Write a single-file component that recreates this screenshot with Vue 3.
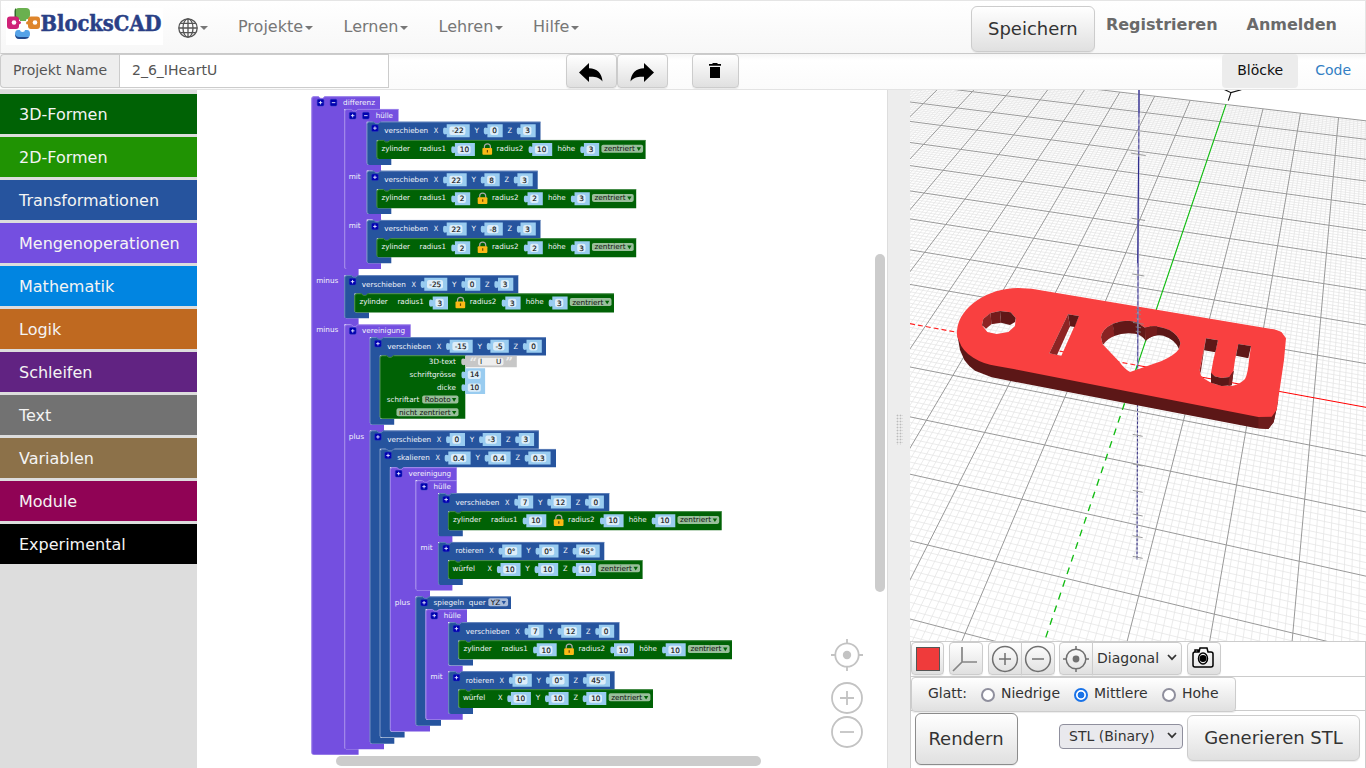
<script setup>
const menus = ['Projekte', 'Lernen', 'Lehren', 'Hilfe']
const categories = [
  ['3D-Formen', '#006205'], ['2D-Formen', '#209303'], ['Transformationen', '#26549e'],
  ['Mengenoperationen', '#744fe0'], ['Mathematik', '#0185e1'], ['Logik', '#bf6920'],
  ['Schleifen', '#612382'], ['Text', '#727272'], ['Variablen', '#8c7149'],
  ['Module', '#900355'], ['Experimental', '#000000']
]

/* ---------- block workspace ---------- */
const PURPLE = '#744fe0', BLUE = '#26549e', GREEN = '#006205'
const shapes = [], texts = [], values = [], icons = [], locks = [], drops = []

function label(t, x, w, y) { texts.push({ t, x, w, y }) }
function icon(x, y, minus) { icons.push({ x, y, minus }) }

// Block that wraps statements: header, left wall, and a foot after every slot.
// Every slot gets a small tab that fills the notch of the block plugged into it.
function wrap(color, x, y, hr, hb, ix, fr, feet) {
  let d = `M${x} ${y + 2.5}Q${x} ${y} ${x + 2.5} ${y}h4.5l2 1.6h2.4l2 -1.6H${hr}V${hb}H${ix}`
  let tabs = `M${ix + 6} ${hb - 0.4}h8.5v2.3h-8.5Z`
  feet.forEach(([a, b], i) => {
    d += `V${a - 2}Q${ix} ${a} ${ix + 2} ${a}H${fr}V${b}`
    d += i < feet.length - 1 ? `H${ix}` : `H${x + 2.5}Q${x} ${b} ${x} ${b - 2.5}Z`
    if (i < feet.length - 1) tabs += `M${ix + 6} ${b - 0.4}h8.5v2.3h-8.5Z`
  })
  const b = feet[feet.length - 1][1]
  const hi = `M${x + 0.8} ${b - 1}Q${x + 0.4} ${b - 1.6} ${x + 0.4} ${b - 3}V${y + 2.6}Q${x + 0.4} ${y + 0.4} ${x + 2.6} ${y + 0.4}h4.4l2 1.6h2.4l2 -1.6H${hr}`
  shapes.push({ d: d + tabs, hi, color })
}
function leaf(x, y, r, b) {
  const d = `M${x} ${y + 2.5}Q${x} ${y} ${x + 2.5} ${y}h4.5l2 1.6h2.4l2 -1.6H${r}V${b}H${x + 2.5}Q${x} ${b} ${x} ${b - 2.5}Z`
  const hi = `M${x + 0.8} ${b - 1}Q${x + 0.4} ${b - 1.6} ${x + 0.4} ${b - 3}V${y + 2.6}Q${x + 0.4} ${y + 0.4} ${x + 2.6} ${y + 0.4}h4.4l2 1.6h2.4l2 -1.6H${r}`
  shapes.push({ d, hi, color: GREEN })
}
const valueWidths = { 1: 15.3, 2: 20 }
function value(t, x, y) {
  let w = valueWidths[t.length] || 23
  if (t[0] === '-' && t.length === 2) w = 18.4
  if (t.includes('.')) w = 22.3
  if (t.includes('°')) w = t.length === 2 ? 19.3 : 23.5
  values.push({ t, x, y, w })
  return x + w
}
function axes(vals, x, y, vy) {
  let p = x
  'XYZ'.split('').forEach((n, i) => {
    label(n, p, 4.5, y)
    p = value(vals[i], p + 12.9, vy) + 4.8
  })
  return p - 4.8
}
const nameWidths = { verschieben: 44, skalieren: 32.5, rotieren: 28.3 }
function transform(name, x, y, fr, foot, vals, hr) {
  wrap(BLUE, x, y, hr, y + 18.3, x + 10, fr, [foot])
  icon(x + 4.8, y + 3.1)
  label(name, x + 17.4, nameWidths[name], y + 11.4)
  axes(vals, x + 17.4 + nameWidths[name] + 5.6, y + 11.4, y + 2.5)
}
function zylinder(x, y, r1, r2, h, r) {
  leaf(x, y, r, y + 19)
  label('zylinder', x + 5, 28.4, y + 11)
  label('radius1', x + 43, 26.4, y + 11)
  let p = value(r1, x + 78.3, y + 3)
  locks.push({ x: p + 7.5, y: y + 3 })
  label('radius2', p + 21.7, 26.6, y + 11)
  p = value(r2, p + 57.3, y + 3)
  label('höhe', p + 5.2, 17.7, y + 11)
  p = value(h, p + 31.7, y + 3)
  drops.push({ t: 'zentriert', x: p + 2.2, y: y + 4.7, w: 41.7, tw: 31 })
}
function wuerfel(x, y, r) {
  leaf(x, y, r, y + 18.7)
  label('würfel', x + 4.5, 22.4, y + 11)
  const p = axes(['10', '10', '10'], x + 39.6, y + 11, y + 2.7)
  drops.push({ t: 'zentriert', x: p + 2.4, y: y + 4, w: 41.7, tw: 31 })
}

wrap(PURPLE, 311.4, 96.3, 380, 109, 344.4, 358.6, [[269, 275.3], [318.3, 324.3], [749.3, 754.7]])
icon(317.2, 99.3); icon(330.2, 99.3, true); label('differenz', 343, 32, 104.9)
wrap(PURPLE, 344.4, 109, 398.5, 121.7, 366.7, 381, [[165, 170.6], [214, 219.6], [263.3, 269]])
icon(349.3, 112.3); icon(362.5, 112.3, true); label('hülle', 375.7, 17.3, 117.7)
transform('verschieben', 366.8, 121.7, 391.3, [159, 165], ['-22', '0', '3'], 540.5)
zylinder(376.6, 140, '10', '10', '3', 645.6)
label('mit', 348.7, 12, 179.2)
transform('verschieben', 366.8, 170.8, 391.3, [208.2, 214], ['22', '8', '3'], 537.7)
zylinder(376.6, 189.2, '2', '2', '3', 636.2)
label('mit', 348.7, 12, 228.2)
transform('verschieben', 366.8, 220, 391.3, [257.3, 263.3], ['22', '-8', '3'], 540.5)
zylinder(376.6, 238.3, '2', '2', '3', 636.2)
label('minus', 316.3, 22, 283)
transform('verschieben', 344.4, 275.2, 369, [312.4, 318.3], ['-25', '0', '3'], 518.3)
zylinder(354.4, 293.4, '3', '3', '3', 614)
label('minus', 316.3, 22, 332)
wrap(PURPLE, 344.4, 324.4, 410.6, 337, 369.8, 384, [[424.8, 430.4], [743.8, 749.3]])
icon(349.4, 327.5); label('vereinigung', 362, 43, 333)
transform('verschieben', 369.8, 337.2, 394.2, [419, 424.8], ['-15', '-5', '0'], 546)
leaf(379.8, 355.4, 465.3, 418.8)
label('3D-text', 428.8, 27, 364)
label('schriftgrösse', 409.5, 46.3, 376.9)
label('dicke', 437, 18.8, 389.9)
label('schriftart', 386.8, 32.5, 402.2)
value('14', 465.1, 368.2); value('10', 465.1, 381)
drops.push({ t: 'Roboto', x: 422.2, y: 395.5, w: 36.2, tw: 26 }, { t: 'nicht zentriert', x: 396.5, y: 408.3, w: 62, tw: 51.5 })
label('plus', 348.7, 15.3, 439)
transform('verschieben', 369.8, 430.5, 394.3, [738, 743.8], ['0', '-3', '3'], 538.8)
transform('skalieren', 379.9, 449, 404.6, [731.8, 737.5], ['0.4', '0.4', '0.3'], 556)
wrap(PURPLE, 390, 467.3, 456.7, 480, 415.6, 430, [[590.5, 596.4], [725.8, 731.5]])
icon(395.3, 470.3); label('vereinigung', 408.4, 42.8, 476)
wrap(PURPLE, 415.6, 480.3, 456.7, 493, 438, 452.4, [[536, 542], [584.8, 590.6]])
icon(420.7, 483.3); label('hülle', 433.6, 17.4, 488.9)
transform('verschieben', 438, 493.1, 462.8, [530.3, 536.2], ['7', '12', '0'], 609.3)
zylinder(448, 511.2, '10', '10', '10', 721.7)
label('mit', 420.6, 12, 550)
transform('rotieren', 438, 542, 462.8, [579, 584.9], ['0°', '0°', '45°'], 604.3)
wuerfel(448, 560.2, 642.6)
label('plus', 394.8, 15.3, 605)
wrap(BLUE, 415.6, 596.4, 511, 609, 425.6, 441, [[720, 725.8]])
icon(420.7, 599.4); label('spiegeln', 433.6, 30.5, 604.8); label('quer', 468.8, 17, 604.8)
drops.push({ t: 'YZ', x: 488.3, y: 598.3, w: 19.8, tw: 9.5, blue: true })
wrap(PURPLE, 425.6, 609.2, 467, 622, 448.2, 462.7, [[665.8, 671.3], [714, 719.8]])
icon(430.9, 612.3); label('hülle', 443.7, 17.3, 617.7)
transform('verschieben', 448.3, 622.2, 473, [659.4, 665.6], ['7', '12', '0'], 619.4)
zylinder(458.4, 640.3, '10', '10', '10', 732)
label('mit', 430.6, 12, 679.3)
transform('rotieren', 448.3, 671.2, 473, [708, 714], ['0°', '0°', '45°'], 614.6)
wuerfel(458.4, 689.3, 653)

/* ---------- ground grid ---------- */
// Plane point -> view point pairs; the projection is a least-squares fit over them
const pairs = [
  [-30, 100, 658, 7], [0, 100, 978, 43], [10, 100, 1090, 57], [20, 100, 1202, 70], [30, 100, 1315, 83],
  [0, 80, 945, 150], [0, 50, 876, 348], [0, 20, 787, 602],
  [-20, -10, 328, 887], [0, -10, 668, 957], [20, -10, 1037, 1025], [30, -10, 1228, 1065],
  [-30, -20, 78, 990], [-10, -20, 435, 1066], [20, -20, 1010, 1187], [30, -20, 1213, 1228],
  [-20, -30, 175, 1186], [0, -30, 563, 1274], [30, -30, 1198, 1413],
  [-20, -40, 83, 1365], [0, -40, 497, 1465], [10, -40, 716, 1517], [30, -40, 1178, 1630]
]
function fit() {
  const A = Array.from({ length: 8 }, () => new Array(9).fill(0))
  const add = (r, v) => {
    for (let i = 0; i < 8; i++) {
      for (let j = 0; j < 8; j++) A[i][j] += r[i] * r[j]
      A[i][8] += r[i] * v
    }
  }
  for (const [X, Y, U, V] of pairs) {
    const x = X / 100, y = Y / 100, u = U / 1000, v = V / 1000
    add([x, y, 1, 0, 0, 0, -u * x, -u * y], u)
    add([0, 0, 0, x, y, 1, -v * x, -v * y], v)
  }
  for (let i = 0; i < 8; i++) {
    let p = i
    for (let k = i + 1; k < 8; k++) if (Math.abs(A[k][i]) > Math.abs(A[p][i])) p = k
    ;[A[i], A[p]] = [A[p], A[i]]
    for (let k = 0; k < 8; k++) {
      if (k === i) continue
      const f = A[k][i] / A[i][i]
      for (let j = i; j < 9; j++) A[k][j] -= f * A[i][j]
    }
  }
  return A.map((r, i) => r[8] / r[i])
}
const H = fit()
const depth = (x, y) => H[6] * x / 100 + H[7] * y / 100 + 1
const project = (X, Y) => {
  const x = X / 100, y = Y / 100, w = depth(X, Y)
  return [(H[0] * x + H[1] * y + H[2]) / w * 1000, (H[3] * x + H[4] * y + H[5]) / w * 1000]
}
function segment(x1, y1, x2, y2) {
  const min = 0.15
  let a = depth(x1, y1), b = depth(x2, y2)
  if (a < min && b < min) return ''
  if (a < min) { const t = (min - a) / (b - a); x1 += (x2 - x1) * t; y1 += (y2 - y1) * t }
  else if (b < min) { const t = (min - a) / (b - a); x2 = x1 + (x2 - x1) * t; y2 = y1 + (y2 - y1) * t }
  const p = project(x1, y1), q = project(x2, y2)
  return `M${p[0].toFixed(1)} ${p[1].toFixed(1)}L${q[0].toFixed(1)} ${q[1].toFixed(1)}`
}
let minor = '', major = ''
for (let i = -100; i <= 100; i++) {
  if (i === 0) continue
  const s = segment(i, -100, i, 100) + segment(-100, i, 100, i)
  if (i % 10 === 0) major += s
  else minor += s
}
const ticks = [[193, 22], [388, 20], [555, 18], [700, 16], [660, 8], [672, 8], [686, 8], [712, 8], [725, 8]]
const lowTicks = [1036, 1125, 1204, 1275, 1340, 1402]
</script>

<template>
  <div class="page">
    <header class="navbar">
      <svg class="logo" width="159" height="37" viewBox="6 8 159 37">
        <rect x="6" y="8" width="157" height="37" fill="#fff" />
        <path d="M15 12q0-4 4-4h7q4 0 4 4v3q0 4-4 4.500V21h-6v-1.500q-5-1-5-4.500Z" fill="#6ab04f" />
        <path d="M14.500 20v-9q0-2 1.500-3v8q1 3 4 3.500" fill="#33692b" />
        <path d="M10 16.500h6q3 0 3 3V21q2 0 2 1.500t-2 2V26q0 3-3 3h-6q-3 0-3-3v-6.500q0-3 3-3Z" fill="#cf2277" />
        <path d="M31 16.500h6q3 0 3 3V26q0 3-3 3h-6q-3 0-3-3v-1.500q-2 0-2-1.500t2-2v-1.500q0-3 3-3Z" fill="#de852b" />
        <path d="M18 30h2q0 2 2.500 2t2.500-2h2q3 0 3 4t-4 4h-7q-4 0-4-4t3-4Z" fill="#55a3e8" />
        <path d="M15 34q1 3 4 3h10q-1 2-4 2h-6q-4 0-4-5Z" fill="#234a8d" />
        <circle cx="14" cy="22.500" r="2.300" fill="#fff" /><circle cx="35" cy="22.500" r="2.300" fill="#fff" />
        <text class="brand" x="40.500" y="31.400" textLength="121" lengthAdjust="spacingAndGlyphs">BlocksCAD</text>
      </svg>
      <span class="globe">
        <svg width="20" height="20" viewBox="0 0 20 20" fill="none" stroke="#555" stroke-width="1.300">
          <circle cx="10" cy="10" r="9.200" /><ellipse cx="10" cy="10" rx="5" ry="9.200" />
          <path d="M10 .8v18.400M.8 10h18.400M2.200 5.300h15.600M2.200 14.700h15.600" />
        </svg><i class="caret"></i>
      </span>
      <nav class="menus">
        <span v-for="m in menus" :key="m" :class="['menu', m]">{{ m }}<i class="caret"></i></span>
      </nav>
      <div class="account">
        <button class="btn save">Speichern</button>
        <b class="reg">Registrieren</b><b>Anmelden</b>
      </div>
    </header>

    <div class="toolbar">
      <span class="addon">Projekt Name</span><span class="field">2_6_IHeartU</span>
      <div class="edit">
        <button class="btn tool"><svg width="24" height="19" viewBox="0 0 24 19"><path d="M0 9.500 10 0v5.200C18 5.500 23 10 23.500 18.500 20.500 14.300 16 13.500 10 13.800V19Z" /></svg></button>
        <button class="btn tool"><svg width="24" height="19" viewBox="0 0 24 19"><path d="M24 9.500 14 0v5.200C6 5.500 1 10 .5 18.500 3.500 14.300 8 13.500 14 13.800V19Z" /></svg></button>
        <button class="btn tool trash"><svg width="12" height="15" viewBox="0 0 12 15"><path d="M1 4h10v11H1ZM0 1h3l1-1h4l1 1h3v1.800H0Z" /></svg></button>
      </div>
      <div class="tabs"><span class="tab active">Blöcke</span><span class="tab">Code</span></div>
    </div>

    <main class="body">
      <aside class="toolbox">
        <div v-for="c in categories" :key="c[0]" class="cat" :style="{ background: c[1] }">{{ c[0] }}</div>
      </aside>

      <section class="workspace">
        <svg width="690" height="678" viewBox="197 90 690 678">
          <g v-for="(s, i) in shapes" :key="'s' + i">
            <path :d="s.d" :fill="s.color" />
            <path :d="s.hi" class="edge" :stroke="s.color === '#006205' ? '#4d914f' : s.color === '#26549e' ? '#6d8cc0' : '#a892ee'" />
          </g>
          <g v-for="(v, i) in values" :key="'v' + i">
            <path :d="`M${v.x} ${v.y}h${v.w}v13h${-v.w}v-3.200q-3.600 1.400-3.600-1.700v-2.800q0-3.200 3.600-1.500Z`" fill="#99ccf0" />
            <rect :x="v.x + 2.700" :y="v.y + 2.400" :width="v.w - 7" height="8.300" rx="2" fill="#dcedf9" />
            <text class="num" :x="v.x + v.w / 2 - 0.500" :y="v.y + 9.200">{{ v.t }}</text>
          </g>
          <g>
            <path d="M465.300 356h51.500v11.300h-51.500v-2.500q-4 1.200-4-1.700v-2.600q0-3 4-1.500Z" fill="#c7c7c7" />
            <rect x="478" y="358" width="25.500" height="7.500" rx="2" fill="#eee" />
            <text class="quote" x="469.500" y="367">“</text><text class="quote" x="505.500" y="367">”</text>
            <text class="str" x="480" y="364.300">I</text><text class="str" x="496" y="364.300">U</text>
          </g>
          <g v-for="(d, i) in drops" :key="'d' + i">
            <rect :x="d.x" :y="d.y" :width="d.w" height="8" rx="1.800" :fill="d.blue ? '#a8bbd8' : '#99bf9b'" />
            <text class="opt" :x="d.x + 2.500" :y="d.y + 6.400" :textLength="d.tw">{{ d.t }}</text>
            <path :d="`M${d.x + d.w - 6.500} ${d.y + 2.600}h4.400l-2.200 3.600Z`" :fill="d.blue ? '#26549e' : '#006205'" />
          </g>
          <g v-for="(k, i) in icons" :key="'i' + i">
            <rect :x="k.x" :y="k.y" width="6.700" height="6.700" rx="1.300" fill="#0000b0" stroke="#2b3fb8" stroke-width=".500" />
            <path :d="`M${k.x + 1.600} ${k.y + 3.350}h3.500` + (k.minus ? '' : `m-1.750-1.750v3.500`)" stroke="#e5e8ff" stroke-width=".900" fill="none" />
          </g>
          <g v-for="(l, i) in locks" :key="'l' + i">
            <path :d="`M${l.x + 2} ${l.y + 5.500}v-1.700q0-2.900 3-2.900t3 2.900v1.700`" fill="none" stroke="#aaa" stroke-width="1.200" />
            <rect :x="l.x" :y="l.y + 5" width="9.700" height="6.800" rx="1" fill="#fbb916" />
            <path :d="`M${l.x + 5} ${l.y + 7}v2.500`" stroke="#6b4700" stroke-width="1.200" />
          </g>
          <text v-for="(t, i) in texts" :key="'t' + i" class="lbl" :x="t.x" :y="t.y" :textLength="t.w" lengthAdjust="spacingAndGlyphs">{{ t.t }}</text>
          <g fill="none" stroke="#c3c3c3" stroke-width="1.800">
            <circle cx="847" cy="655" r="11.700" /><circle cx="847" cy="655" r="4.200" fill="#c3c3c3" stroke="none" />
            <path d="M847 639v5M847 666v5M831 655h5M858 655h5" />
            <circle cx="847" cy="698" r="15" /><path d="M840 698h14M847 691v14" />
            <circle cx="847" cy="732" r="15" /><path d="M840 732h14" />
          </g>
          <rect x="875" y="254" width="10" height="338" rx="5" fill="#ccc" />
          <rect x="336" y="756" width="425" height="10" rx="5" fill="#ccc" />
        </svg>
      </section>

      <div class="splitter"><i class="grip"></i></div>

      <section class="side">
        <svg class="view" width="456" height="551" viewBox="30 0 1368 1653">
          <path :d="minor" stroke="#e6e6e6" stroke-width="2.400" fill="none" />
          <path :d="major" stroke="#999" stroke-width="3" fill="none" />
          <path d="M30 701 712 826" stroke="#f22" stroke-width="3.500" stroke-dasharray="15 9" fill="none" />
          <path d="M712 826 1398 952" stroke="#f00" stroke-width="3" fill="none" />
          <path d="M978 43 712 826" stroke="#1b1" stroke-width="3.500" fill="none" />
          <path d="M712 826 433 1655" stroke="#1b1" stroke-width="4" stroke-dasharray="21 19" fill="none" />
          <path d="M713 826 711 1410" stroke="#aaaac8" stroke-width="3.500" fill="none" />
          <path d="M713 826 711 1410" stroke="#3a3583" stroke-width="3" stroke-dasharray="7 6" fill="none" />
          <path v-for="t in lowTicks" :key="t" :d="`M698 ${t - 3}l30 6`" stroke="#999" stroke-width="3" />
          <path d="M172 735 180 780 193 810Q205 828 225 842L275 862 1070 1015 1105 1017 1121 996 1135 930 1112 972 1078 974 345 830 250 808 188 760Z" fill="#5c1717" />
          <path d="M1075 975v40l30 2 16-20 11-50-19 28Z" fill="#6d1c1c" />
          <path fill="#f94040" fill-rule="evenodd" d="M355 594 395 596 1110 716Q1135 719 1145 727L1158 745 1152 810 1130 960 1115 980 1075 981 345 838 290 828Q250 822 220 803 187 783 177 752 168 735 171 722C177 650 264 594 355 594Z
            M246 706 250 686 272 669 300 663 332 667 347 684 345 708 325 726 290 732 262 726Z
            M504 673 537 678 484 797 448 790Z
            M608 763 603 742Q605 718 638 701 680 686 710 697L735 713Q770 703 810 721 838 738 841 760L837 777Q825 795 785 813L690 846Q675 838 655 812Z
            M918 745 954 751 940 810 933 850 944 859 965 864 988 861 1000 846 1005 810 1015 762 1053 768 1047 810Q1044 850 1035 867 1020 883 995 888L960 886Q922 877 903 857L899 840Z" />
          <path d="M246 706 250 686 272 669 274 703 258 716Z" fill="#8d2424" />
          <path d="M272 669 300 663 303 698 274 703Z" fill="#731c1c" />
          <path d="M300 663 332 667 347 684 345 696 330 705 303 698Z" fill="#5f1717" />
          <path d="M504 673 537 678 524 711 510 709Z" fill="#5f1717" />
          <path d="M504 673 510 709 471 795 448 790Z" fill="#8d2424" />
          <path d="M608 763 603 742Q605 718 638 701L645 737Q620 746 611 763Z" fill="#892323" />
          <path d="M638 701Q680 686 710 697L735 713 737 752Q725 734 705 731 670 726 643 738Z" fill="#631818" />
          <path d="M735 713Q770 703 810 721 838 738 841 760L837 777Q825 748 790 737 760 732 737 752Z" fill="#5c1717" />
          <path d="M735 713Q755 707 772 709L770 736Q750 740 737 752Z" fill="#731c1c" />
          <path d="M918 745 954 751 946 787 912 781ZM1015 762 1053 768 1045 805 1008 797Z" fill="#5f1717" />
          <path d="M918 745 912 781 902 850 899 840Z" fill="#8d2424" />
          <path d="M933 848 944 859 965 864 988 861 1001 842 995 886 965 888 933 878Z" fill="#5c1717" />
          <path d="M988 861 1001 842 995 886 985 888Z" fill="#7a1f1f" />
          <path d="M717 0 713 826" stroke="#918fc2" stroke-width="4.500" fill="none" />
          <path d="M717 0V70M716 200 713 520" stroke="#28258a" stroke-width="3" fill="none" />
          <path d="M717 70 716 200M714 520 713 826" stroke="#39348c" stroke-width="2" stroke-dasharray="12 7" fill="none" />
          <path v-for="t in ticks" :key="t[0]" :d="`M${715 - t[1]} ${t[0] - t[1] / 6}L${715 + t[1]} ${t[0] + t[1] / 6}`" stroke="#888" stroke-width="2.500" />
          <path d="M972-2 993 8 1024-1M993 8 985 32" stroke="#111" stroke-width="3.500" fill="none" />
        </svg>

        <div class="row r1">
          <button class="btn ic color"><i class="swatch"></i></button>
          <button class="btn ic axesbtn"><svg width="26" height="26" viewBox="0 0 26 26" fill="none" stroke="#858585" stroke-width="1.700"><path d="M10 1v15h15M10 16 1 25" /></svg></button>
          <button class="btn ic zin"><svg width="28" height="28" viewBox="0 0 28 28" fill="none" stroke="#707070" stroke-width="1.500"><circle cx="14" cy="14" r="12.400" /><path d="M8 14h12M14 8v12" /></svg></button>
          <button class="btn ic zout"><svg width="28" height="28" viewBox="0 0 28 28" fill="none" stroke="#707070" stroke-width="1.500"><circle cx="14" cy="14" r="12.400" /><path d="M8 14h12" /></svg></button>
          <button class="btn ic home"><svg width="28" height="28" viewBox="0 0 28 28" fill="none" stroke="#707070" stroke-width="1.500"><circle cx="14" cy="14" r="9.800" /><circle cx="14" cy="14" r="3.400" fill="#707070" stroke="none" /><path d="M14 1v4M14 23v4M1 14h4M23 14h4" /></svg></button>
          <div class="btn diag">Diagonal<svg width="10" height="7" viewBox="0 0 10 7" fill="none" stroke="#333" stroke-width="1.700"><path d="m1 1 4 4.200L9 1" /></svg></div>
          <button class="btn ic cam"><svg width="22" height="22" viewBox="0 0 22 22" fill="none" stroke="#000" stroke-width="1.500"><path d="M2 5h5l1-4h7l1 4h3q2 0 2 2v11q0 2-2 2H3q-2 0-2-2V7q0-2 2-2ZM3 5V3h3v2" /><ellipse cx="11" cy="11.500" rx="4.500" ry="5.500" /><circle cx="11" cy="11.500" r="2.700" fill="#000" /></svg></button>
        </div>
        <div class="row r2">
          <div class="btn smooth">
            <span class="glatt">Glatt:</span>
            <i class="radio"></i><span class="n">Niedrige</span>
            <i class="radio on"></i><span class="m">Mittlere</span>
            <i class="radio"></i><span>Hohe</span>
          </div>
        </div>
        <div class="row r3">
          <button class="btn render">Rendern</button>
          <div class="select">STL (Binary)<svg width="10" height="7" viewBox="0 0 10 7" fill="none" stroke="#333" stroke-width="1.700"><path d="m1 1 4 4.200L9 1" /></svg></div>
          <button class="btn gen">Generieren STL</button>
        </div>
      </section>
    </main>
  </div>
</template>

<style>
body { background: #fff; overflow: hidden; }
</style>

<style scoped>
* { box-sizing: border-box; }
.page { width: 1366px; height: 768px; display: flex; flex-direction: column; font-family: "DejaVu Sans", sans-serif; color: #333; overflow: hidden; }
.navbar { height: 54px; flex: none; display: flex; align-items: flex-start; border: 1px solid #e5e5e5; border-bottom-color: #c9c9c9; background: linear-gradient(#fff, #f7f7f7); padding: 7px 0 0 5px; }
.logo { flex: none; display: block; overflow: visible; }
.brand { font: bold 23px "DejaVu Serif Condensed", "DejaVu Serif", serif; fill: #2a3f86; stroke: #2a3f86; stroke-width: .5; }
.globe { display: flex; align-items: center; margin: 10px 0 0 13px; height: 20px; width: 32px; }
.caret { display: inline-block; width: 0; border: 4px solid transparent; border-top-color: #777; border-bottom: 0; margin-left: 2px; vertical-align: 2px; }
.menus { display: flex; font-size: 16px; line-height: 20px; color: #777; margin: 9px 0 0 28px; }
.menu { white-space: nowrap; flex: none; }
.Projekte { width: 105.500px; }
.Lernen { width: 95px; }
.Lehren { width: 94.500px; }
.account { margin-left: auto; display: flex; color: #6a6a6a; font-size: 16px; line-height: 20px; padding-right: 28px; }
.account b { margin-top: 7px; }
.reg { margin-right: 29px; }
.btn { font-family: inherit; color: #333; border: 1px solid #ccc; border-radius: 4px; background: linear-gradient(#fff, #e0e0e0); box-shadow: inset 0 1px 0 rgba(255,255,255,.15), 0 1px 1px rgba(0,0,0,.075); padding: 0; display: flex; align-items: center; justify-content: center; flex: none; }
.save { width: 124px; height: 46px; font-size: 18px; border-radius: 6px; margin: -2px 11px 0 0; padding-bottom: 2px; }
.toolbar { height: 36px; flex: none; display: flex; border-bottom: 1px solid #e3e3e3; background: linear-gradient(#f5f5f5, #fff 6px, #fbfbfb); font-size: 14px; color: #555; }
.addon, .field { height: 34px; border: 1px solid #ccc; line-height: 31px; padding-left: 12px; }
.addon { width: 119px; background: #eee; border-radius: 4px 0 0 4px; border-right: 0; }
.field { width: 270px; background: #fff; }
.edit { display: flex; margin-left: 177px; }
.tool { width: 51px; height: 34px; padding: 2px 1px 0 0; }
.trash { width: 47px; margin-left: 24px; padding-top: 0; padding-bottom: 1px; }
.tabs { margin-left: auto; display: flex; height: 34px; }
.tab { padding: 0 15px; line-height: 32px; color: #337fc4; }
.tab.active { width: 76px; background: #ececec; border-radius: 4px; color: #111; margin-right: 2px; }
.body { flex: 1; display: flex; min-height: 0; }
.toolbox { width: 197px; flex: none; background: #ddd; padding-top: 4px; }
.cat { height: 40px; margin-bottom: 3px; padding-left: 19px; font-size: 16px; line-height: 42px; color: #f4f4f4; }
.workspace { width: 690px; flex: none; background: #fff; }
.workspace svg, .view { display: block; }
.edge { fill: none; stroke-width: .8; }
.lbl, .num, .opt, .str { font: 7.330px "DejaVu Sans", sans-serif; }
.lbl { fill: #f3f4fa; }
.num { fill: #111; text-anchor: middle; stroke: #111; stroke-width: .15; }
.opt, .str { fill: #111; }
.quote { font: bold 13px "DejaVu Serif", serif; fill: #eee; }
.splitter { width: 23px; flex: none; background: #ededed; border-left: 1px solid #ddd; display: flex; align-items: center; justify-content: center; }
.grip { width: 7px; height: 31px; background: radial-gradient(circle, #bbb 0.800px, transparent 1.100px) 0 0 / 3px 3px; }
.side { width: 456px; flex: none; display: flex; flex-direction: column; }
.view { flex: none; }
.row { display: flex; border: 1px solid #ccc; border-bottom: 0; }
.r1 { height: 35px; flex: none; }
.r2 { height: 34px; flex: none; }
.r3 { flex: 1; align-items: flex-start; border-right-color: #ccc; }
.ic { width: 34px; height: 33px; padding-right: 1px; }
.axesbtn, .zin { margin-left: 5px; }
.axesbtn { padding-right: 3px; }
.color { width: 33px; padding-right: 0; }
.zin { border-radius: 4px 0 0 4px; }
.zout { border-radius: 0 4px 4px 0; margin-left: -1px; }
.home { border-radius: 4px 0 0 4px; margin-left: 4px; }
.diag { width: 90px; height: 33px; margin-left: -1px; border-radius: 0 4px 4px 0; font-size: 14px; justify-content: space-between; padding: 0 4px 2px; }
.cam { margin-left: 5px; padding: 0 3px 2px 0; }
.swatch { width: 24px; height: 24px; border: 1px solid #555; background: #ef3b3b; }
.smooth { width: 325px; height: 35px; font-size: 14px; justify-content: flex-start; padding-left: 16px; padding-bottom: 2px; z-index: 1; }
.smooth span { position: relative; top: -1px; }
.glatt { width: 53px; }
.radio { width: 14px; height: 14px; border-radius: 50%; border: 2px solid #8f8f9d; background: #fff; margin-right: 6px; margin-top: 3px; }
.radio.on { border-color: #1a73e8; background: radial-gradient(circle, #1a73e8 3px, #fff 3.700px); }
.n { width: 73px; }
.m { width: 68px; }
.render { width: 103px; height: 52px; margin: 2px 0 0 4px; font-size: 18px; border-color: #8c8c8c; border-radius: 6px; padding: 0 1px 2px 0; }
.select { width: 124px; height: 25px; margin: 13px 0 0 41px; border: 1px solid #8f8f9d; border-radius: 4px; background: #e9e9ed; font-size: 14px; display: flex; align-items: center; justify-content: space-between; padding: 0 5px 2px 9px; }
.gen { width: 173px; height: 46px; margin: 4px 0 0 4px; font-size: 18px; border-radius: 6px; padding-bottom: 2px; }
</style>
